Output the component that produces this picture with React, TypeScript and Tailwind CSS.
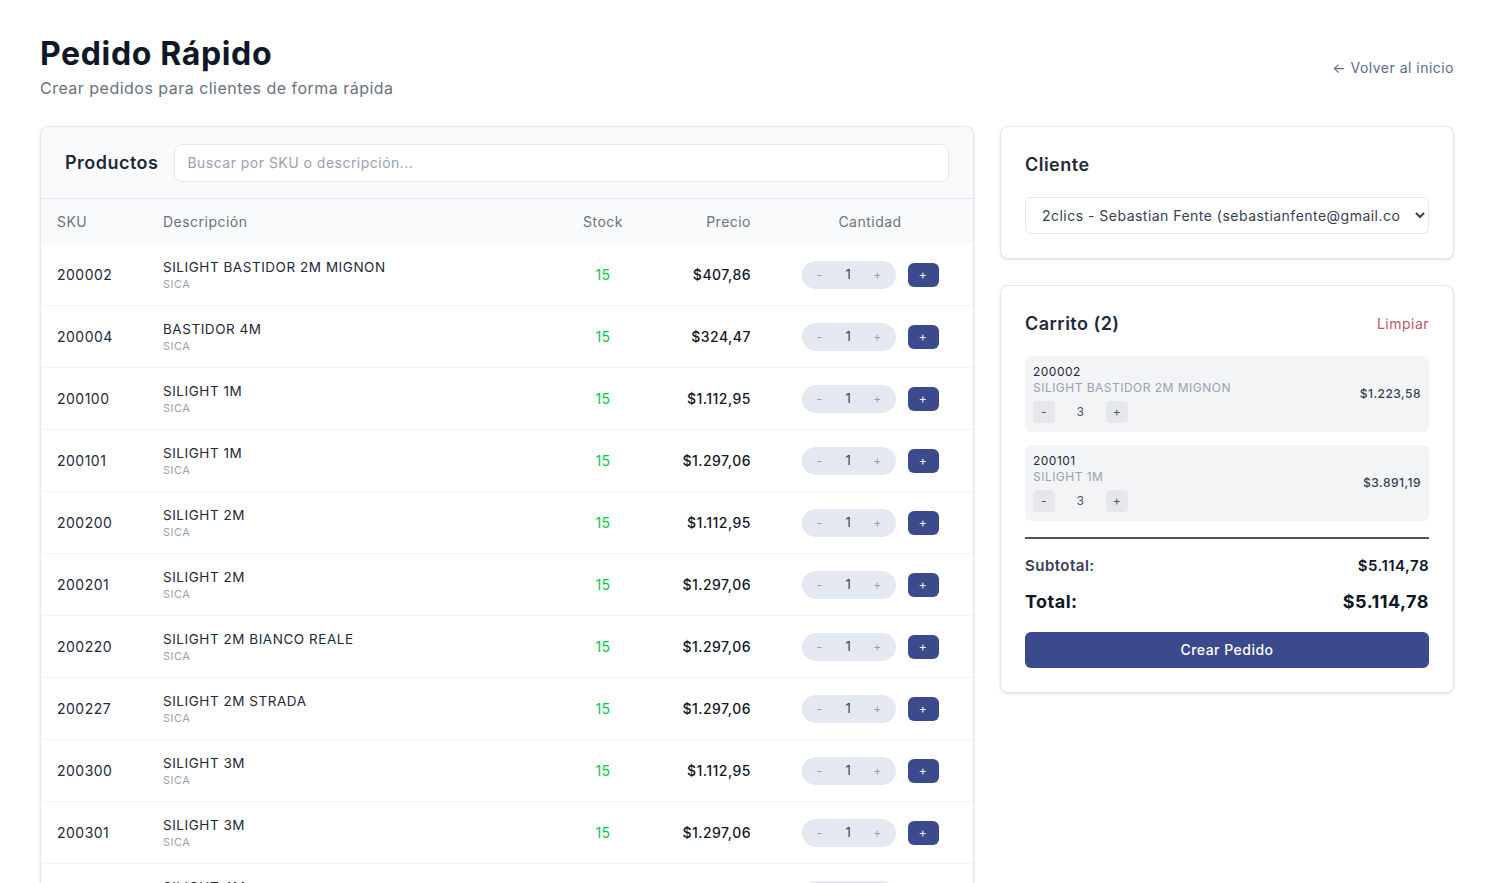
import { useState } from 'react';

type Product = { sku: string; name: string; brand: string; stock: number; price: string };

const products: Product[] = [
  { sku: '200002', name: 'SILIGHT BASTIDOR 2M MIGNON', brand: 'SICA', stock: 15, price: '$407,86' },
  { sku: '200004', name: 'BASTIDOR 4M', brand: 'SICA', stock: 15, price: '$324,47' },
  { sku: '200100', name: 'SILIGHT 1M', brand: 'SICA', stock: 15, price: '$1.112,95' },
  { sku: '200101', name: 'SILIGHT 1M', brand: 'SICA', stock: 15, price: '$1.297,06' },
  { sku: '200200', name: 'SILIGHT 2M', brand: 'SICA', stock: 15, price: '$1.112,95' },
  { sku: '200201', name: 'SILIGHT 2M', brand: 'SICA', stock: 15, price: '$1.297,06' },
  { sku: '200220', name: 'SILIGHT 2M BIANCO REALE', brand: 'SICA', stock: 15, price: '$1.297,06' },
  { sku: '200227', name: 'SILIGHT 2M STRADA', brand: 'SICA', stock: 15, price: '$1.297,06' },
  { sku: '200300', name: 'SILIGHT 3M', brand: 'SICA', stock: 15, price: '$1.112,95' },
  { sku: '200301', name: 'SILIGHT 3M', brand: 'SICA', stock: 15, price: '$1.297,06' },
  { sku: '200400', name: 'SILIGHT 4M', brand: 'SICA', stock: 15, price: '$1.112,95' },
];

const cart = [
  { sku: '200002', name: 'SILIGHT BASTIDOR 2M MIGNON', qty: 3, total: '$1.223,58' },
  { sku: '200101', name: 'SILIGHT 1M', qty: 3, total: '$3.891,19' },
];

const cols = 'grid grid-cols-[122px_1fr_88px_120px_206px] items-center';

function ProductRow({ p }: { p: Product }) {
  const [qty, setQty] = useState(1);
  return (
    <div className={`${cols} h-[62px] border-b border-gray-100`}>
      <div className="pl-4 text-sm text-gray-800">{p.sku}</div>
      <div className="flex flex-col">
        <span className="text-[13.5px] leading-[18px] tracking-[0.04em] text-gray-800">{p.name}</span>
        <span className="text-[11px] leading-[16px] text-gray-400">{p.brand}</span>
      </div>
      <div className="text-center text-sm text-green-500">{p.stock}</div>
      <div className="pr-4 text-right text-sm font-medium text-gray-900">{p.price}</div>
      <div className="flex items-center justify-center gap-3">
        <div className="flex h-7 w-[94px] items-center justify-between rounded-full bg-[#e4e8f1] px-1 text-xs">
          <button className="w-7 text-gray-400" onClick={() => setQty(Math.max(1, qty - 1))}>
            -
          </button>
          <span className="text-[13px] text-gray-700">{qty}</span>
          <button className="w-7 text-gray-400" onClick={() => setQty(qty + 1)}>
            +
          </button>
        </div>
        <button className="flex h-6 w-[31px] items-center justify-center rounded-md bg-[#3a4a8c] text-xs text-white">
          +
        </button>
      </div>
    </div>
  );
}

export default function App() {
  return (
    <div className="min-h-screen bg-white pl-10 pr-9 pt-9 font-[Inter,'Open_Sans',sans-serif] tracking-[0.03em] text-gray-900">
      <div className="mb-[26px] flex items-center justify-between">
        <div>
          <h1 className="text-[32px] font-bold leading-9 tracking-[0.02em] text-gray-900">Pedido Rápido</h1>
          <p className="mt-1 text-base leading-6 text-gray-500">Crear pedidos para clientes de forma rápida</p>
        </div>
        <a href="#" className="text-sm text-[#5b6b8c]">
          ← Volver al inicio
        </a>
      </div>

      <div className="flex items-start gap-[26px]">
        <div className="w-[934px] overflow-hidden rounded-lg border border-gray-200 bg-white shadow-sm">
          <div className="flex h-[72px] items-center gap-4 border-b border-gray-200 bg-gray-50 px-6">
            <h2 className="text-lg font-semibold text-gray-800">Productos</h2>
            <input
              type="text"
              placeholder="Buscar por SKU o descripción..."
              className="h-[38px] flex-1 rounded-lg border border-gray-200 bg-white px-3 text-sm placeholder:text-gray-400 outline-none"
            />
          </div>
          <div className={`${cols} h-[45px] bg-gray-50 text-sm text-gray-500`}>
            <div className="pl-4">SKU</div>
            <div>Descripción</div>
            <div className="text-center">Stock</div>
            <div className="pr-4 text-right">Precio</div>
            <div className="text-center">Cantidad</div>
          </div>
          {products.map((p) => (
            <ProductRow key={p.sku} p={p} />
          ))}
        </div>

        <div className="flex w-[454px] flex-col gap-[26px]">
          <div className="rounded-lg border border-gray-200 bg-white p-6 shadow-sm">
            <h2 className="mb-[18px] text-lg font-semibold leading-7 text-gray-800">Cliente</h2>
            <select className="h-[37px] w-full rounded-md border border-gray-200 bg-white px-3 text-sm text-gray-700">
              <option>2clics - Sebastian Fente (sebastianfente@gmail.com)</option>
            </select>
          </div>

          <div className="rounded-lg border border-gray-200 bg-white p-6 shadow-sm">
            <div className="mb-[18px] flex items-center justify-between">
              <h2 className="text-lg font-semibold leading-7 text-gray-800">Carrito (2)</h2>
              <button className="text-sm text-[#c0566a]">Limpiar</button>
            </div>
            <div className="flex flex-col gap-[13px]">
              {cart.map((c) => (
                <div key={c.sku} className="flex items-center justify-between rounded-md bg-gray-100 px-2 pb-[9px] pt-2">
                  <div>
                    <div className="text-xs leading-4 text-gray-800">{c.sku}</div>
                    <div className="text-xs leading-4 text-gray-400">{c.name}</div>
                    <div className="mt-[5px] flex items-center gap-3">
                      <button className="h-[22px] w-[22px] rounded bg-gray-200 text-xs text-gray-600">-</button>
                      <span className="w-[27px] text-center text-xs text-gray-600">{c.qty}</span>
                      <button className="h-[22px] w-[22px] rounded bg-gray-200 text-xs text-gray-600">+</button>
                    </div>
                  </div>
                  <div className="text-xs font-medium text-gray-700">{c.total}</div>
                </div>
              ))}
            </div>
            <div className="mt-4 border-t-2 border-gray-600 pt-[17px]">
              <div className="flex justify-between text-[15px] font-semibold leading-5 text-gray-700">
                <span>Subtotal:</span>
                <span className="text-gray-900">$5.114,78</span>
              </div>
              <div className="mt-3 flex justify-between text-lg font-bold leading-7 text-gray-900">
                <span>Total:</span>
                <span>$5.114,78</span>
              </div>
              <button className="mt-4 h-9 w-full rounded-md bg-[#3a4a8c] text-sm font-medium text-white">
                Crear Pedido
              </button>
            </div>
          </div>
        </div>
      </div>
    </div>
  );
}
